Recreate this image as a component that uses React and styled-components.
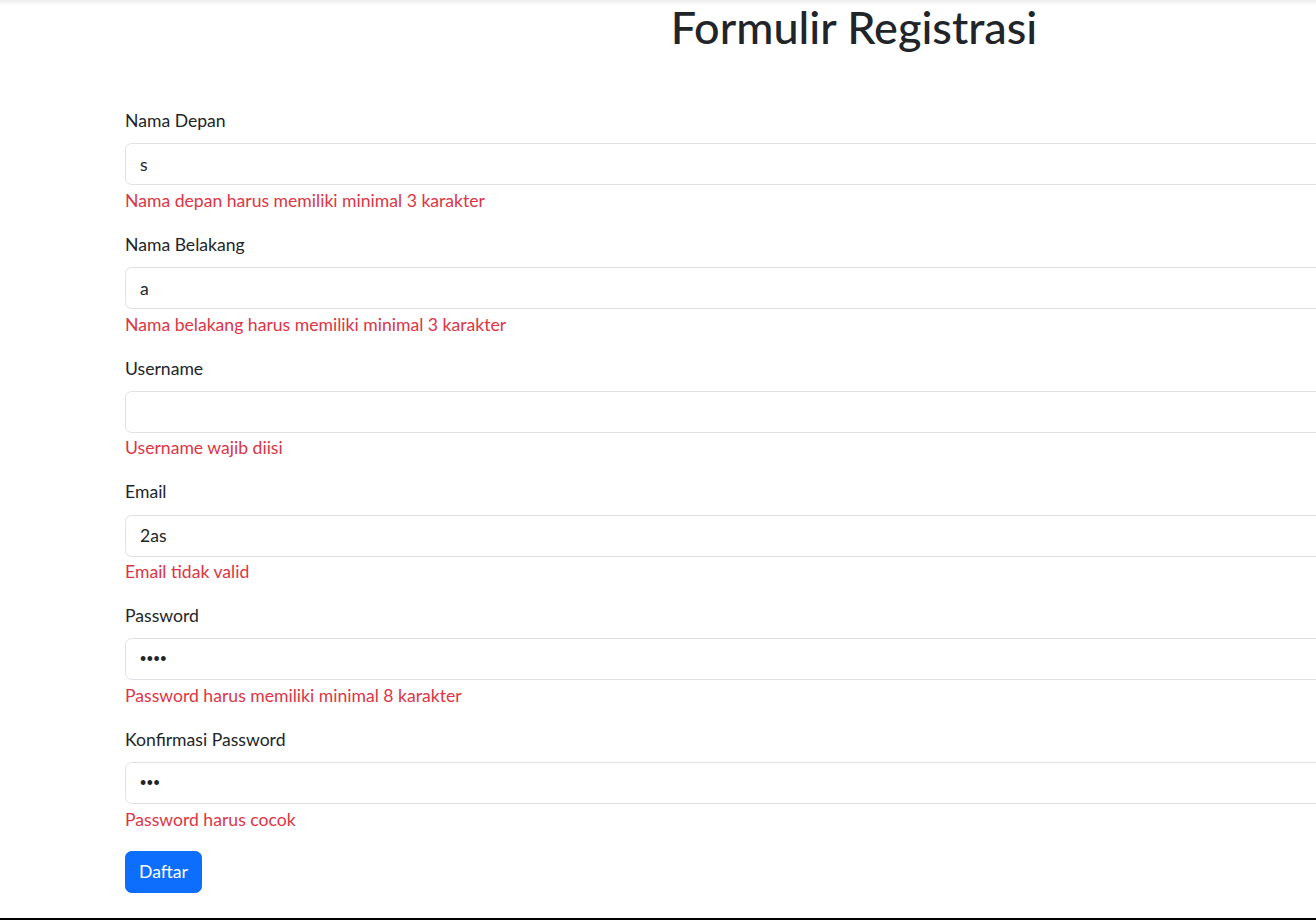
import React, { useState } from 'react';
import styled, { createGlobalStyle } from 'styled-components';

const GlobalStyle = createGlobalStyle`
  html, body {
    margin: 0;
    padding: 0;
    background: #fff;
    overflow: hidden;
  }
  body {
    font-family: Lato, "Noto Sans", "Liberation Sans", sans-serif;
    color: #212529;
  }
  * { box-sizing: border-box; }
`;

const TopShadow = styled.div`
  position: fixed;
  top: 0;
  left: 0;
  right: 0;
  height: 6px;
  background: linear-gradient(to bottom, rgba(0, 0, 0, 0.07), rgba(0, 0, 0, 0));
  pointer-events: none;
`;

const BottomEdge = styled.div`
  position: fixed;
  left: 0;
  right: 0;
  bottom: 0;
  height: 2px;
  background: #000;
`;

const Page = styled.div`
  width: 1458px;
  margin-left: 125px;
`;

const Title = styled.h1`
  width: fit-content;
  margin: 0 auto 54px;
  font-size: 45px;
  font-weight: 500;
  line-height: 54px;
`;

const Form = styled.form`
  display: flex;
  flex-direction: column;
`;

const Field = styled.div`
  margin-bottom: 17.6px;
`;

const Label = styled.label`
  display: block;
  margin-bottom: 8.8px;
  font-size: 17.6px;
  line-height: 26.4px;
`;

const Input = styled.input`
  display: block;
  width: 100%;
  height: 42px;
  padding: 0 14px;
  font-family: ${(p) => (p.type === 'password' ? '"Liberation Sans", sans-serif' : 'inherit')};
  font-size: 17.6px;
  letter-spacing: ${(p) => (p.type === 'password' ? '0.6px' : 'normal')};
  color: #212529;
  background: #fff;
  border: 1px solid #dee2e6;
  border-radius: 6.6px;
  outline: none;
`;

const Error = styled.div`
  margin-top: 2.6px;
  font-size: 17.6px;
  line-height: 26.4px;
  color: #dc3545;
`;

const Button = styled.button`
  align-self: flex-start;
  height: 42px;
  padding: 0 13px;
  font-family: inherit;
  font-size: 17.6px;
  color: #fff;
  background: #0d6efd;
  border: 1px solid #0d6efd;
  border-radius: 6.6px;
  cursor: pointer;
`;

const fields = [
  { id: 'first', label: 'Nama Depan', value: 's', error: 'Nama depan harus memiliki minimal 3 karakter' },
  { id: 'last', label: 'Nama Belakang', value: 'a', error: 'Nama belakang harus memiliki minimal 3 karakter' },
  { id: 'user', label: 'Username', value: '', error: 'Username wajib diisi' },
  { id: 'email', label: 'Email', value: '2as', error: 'Email tidak valid' },
  { id: 'pass', label: 'Password', value: 'abcd', type: 'password', error: 'Password harus memiliki minimal 8 karakter' },
  { id: 'confirm', label: 'Konfirmasi Password', value: 'abc', type: 'password', error: 'Password harus cocok' },
];

const App = () => {
  const [values, setValues] = useState(
    Object.fromEntries(fields.map((f) => [f.id, f.value]))
  );

  return (
    <>
      <GlobalStyle />
      <TopShadow />
      <Page>
        <Title>Formulir Registrasi</Title>
        <Form onSubmit={(e) => e.preventDefault()}>
          {fields.map((f) => (
            <Field key={f.id}>
              <Label htmlFor={f.id}>{f.label}</Label>
              <Input
                id={f.id}
                type={f.type || 'text'}
                value={values[f.id]}
                onChange={(e) => setValues({ ...values, [f.id]: e.target.value })}
              />
              <Error>{f.error}</Error>
            </Field>
          ))}
          <Button type="submit">Daftar</Button>
        </Form>
      </Page>
      <BottomEdge />
    </>
  );
};

export default App;
